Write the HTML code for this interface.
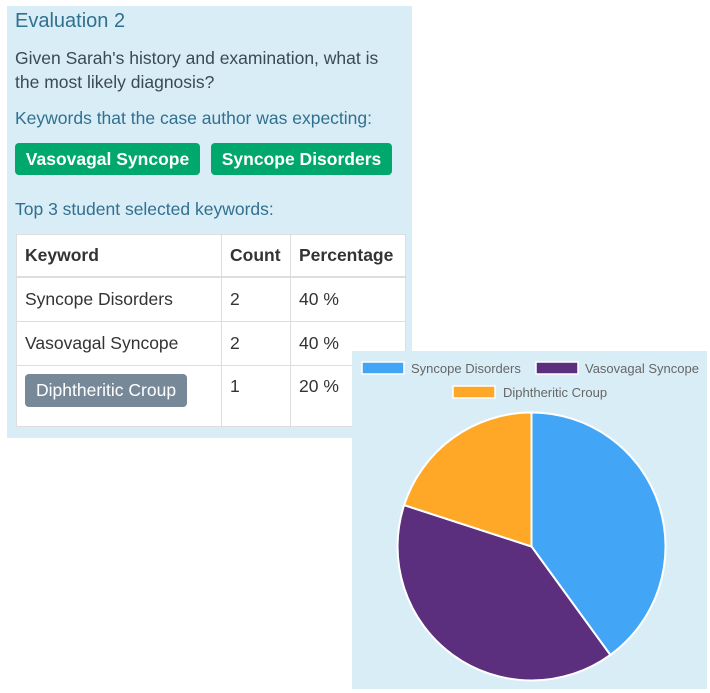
<!DOCTYPE html>
<html><head><style>
body{margin:0;width:710px;height:693px;background:#fff;font-family:"Liberation Sans",sans-serif;position:relative;overflow:hidden}
.abs{position:absolute}
#left{left:7px;top:6px;width:405px;height:432px;background:#d9edf7;color:#31708f}
.t{position:absolute;white-space:nowrap}
.badge{position:absolute;background:#00a86d;color:#fff;font-weight:bold;font-size:17.5px;border-radius:4px;height:32px;line-height:32px;text-align:center}
table{position:absolute;left:16px;top:234px;border-collapse:collapse;background:#fff;font-size:17.5px;color:#333;table-layout:fixed;width:389px}
td,th{border:1px solid #ddd;padding:0 8px;text-align:left;vertical-align:top;white-space:nowrap}
th{height:41px;line-height:41px;border-bottom:2px solid #ddd}
td{height:43px;line-height:43px}
</style></head><body>
<div id="left" class="abs">
<div class="t" style="left:8px;top:4px;font-size:20px">Evaluation 2</div>
<div class="t" style="left:8px;top:40px;font-size:17.5px;line-height:24px;color:#3a4a55">Given Sarah's history and examination, what is<br>the most likely diagnosis?</div>
<div class="t" style="left:8px;top:102px;font-size:17.5px">Keywords that the case author was expecting:</div>
<div class="badge" style="left:8px;top:137px;width:185px">Vasovagal Syncope</div>
<div class="badge" style="left:204px;top:137px;width:181px">Syncope Disorders</div>
<div class="t" style="left:8px;top:193px;font-size:17.5px">Top 3 student selected keywords:</div>
</div>
<table>
<colgroup><col style="width:205px"><col style="width:69px"><col style="width:115px"></colgroup>
<tr><th>Keyword</th><th>Count</th><th>Percentage</th></tr>
<tr><td>Syncope Disorders</td><td>2</td><td>40 %</td></tr>
<tr><td>Vasovagal Syncope</td><td>2</td><td>40 %</td></tr>
<tr><td style="height:52px;line-height:normal;padding-top:8px"><span style="display:inline-block;background:#778899;color:#fff;border-radius:4px;padding:0 11px;height:33px;line-height:33px;font-size:17.5px">Diphtheritic Croup</span></td><td style="height:52px;line-height:40px">1</td><td style="height:52px;line-height:40px">20 %</td></tr>
</table>
<div class="abs" style="left:352px;top:351px;width:355px;height:338px;background:#d9edf7"></div>
<svg class="abs" style="left:0;top:0" width="710" height="693">
<g font-family="Liberation Sans" font-size="13" fill="#666">
<rect x="362" y="362" width="42" height="12" fill="#42a5f5" stroke="#fff" stroke-width="1.5"/>
<text x="411" y="373">Syncope Disorders</text>
<rect x="536" y="362" width="42" height="12" fill="#5c2e7e" stroke="#fff" stroke-width="1.5"/>
<text x="585" y="373">Vasovagal Syncope</text>
<rect x="453" y="386" width="42" height="12" fill="#ffa726" stroke="#fff" stroke-width="1.5"/>
<text x="503" y="397">Diphtheritic Croup</text>
</g>
<g stroke="#fff" stroke-width="2">
<path d="M531.5 546.5 L531.5 412.5 A134 134 0 0 1 610.3 654.9 Z" fill="#42a5f5"/>
<path d="M531.5 546.5 L610.3 654.9 A134 134 0 0 1 404.1 505.1 Z" fill="#5c2e7e"/>
<path d="M531.5 546.5 L404.1 505.1 A134 134 0 0 1 531.5 412.5 Z" fill="#ffa726"/>
</g>
</svg>
</body></html>
